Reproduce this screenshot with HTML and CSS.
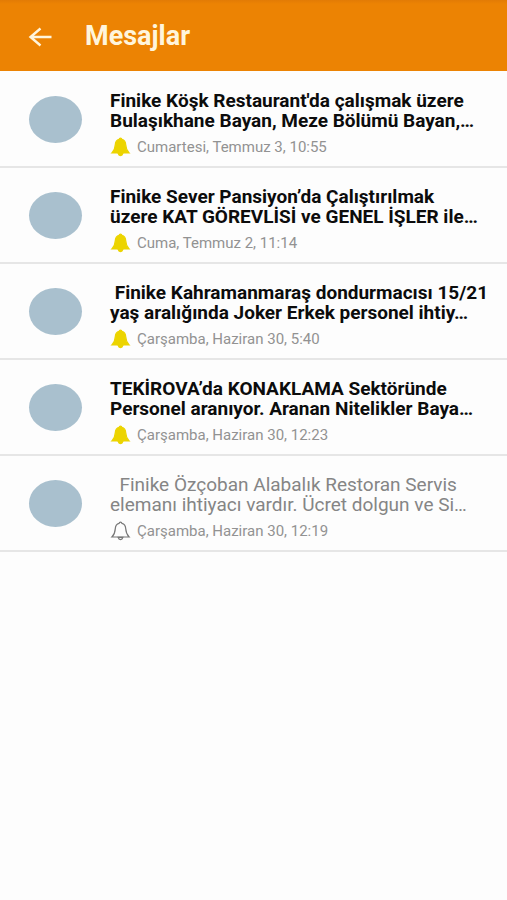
FILE: index.html
```html
<!DOCTYPE html>
<html lang="tr">
<head>
<meta charset="utf-8">
<meta name="viewport" content="width=device-width, initial-scale=1">
<title>Mesajlar</title>
<link rel="stylesheet" href="styles.css">
</head>
<body>
<svg class="sprite" aria-hidden="true">
  <symbol id="bell" viewBox="0 0 20 20">
    <path d="M10 1.2C10.8 1.2 11.3 1.7 11.4 2.3C14 3 15.1 5 15.2 7.6C15.4 11.4 16 13.4 18.6 16H1.4C4 13.4 4.6 11.4 4.8 7.6C4.9 5 6 3 8.6 2.3C8.7 1.7 9.2 1.2 10 1.2Z"/>
    <path d="M7.6 16.4Q8.2 18.6 10 18.6T12.4 16.4Z"/>
  </symbol>
</svg>
<header class="app-bar">
  <button class="back" type="button" aria-label="Geri">
    <svg class="back-icon" viewBox="0 0 24 20" aria-hidden="true"><path d="M23 10H2M12 1.5L2 10L12 18.5"/></svg>
  </button>
  <h1 class="app-title">Mesajlar</h1>
</header>
<main>
  <ul class="messages">
    <li class="message unread">
      <span class="avatar"></span>
      <div class="body">
        <h2 class="text">Finike Köşk Restaurant'da çalışmak üzere<br>Bulaşıkhane Bayan, Meze Bölümü Bayan,…</h2>
        <p class="meta"><svg class="bell" aria-hidden="true"><use href="#bell"/></svg><time>Cumartesi, Temmuz 3, 10:55</time></p>
      </div>
    </li>
    <li class="message unread">
      <span class="avatar"></span>
      <div class="body">
        <h2 class="text">Finike Sever Pansiyon’da Çalıştırılmak<br>üzere KAT GÖREVLİSİ ve GENEL İŞLER ile…</h2>
        <p class="meta"><svg class="bell" aria-hidden="true"><use href="#bell"/></svg><time>Cuma, Temmuz 2, 11:14</time></p>
      </div>
    </li>
    <li class="message unread">
      <span class="avatar"></span>
      <div class="body">
        <h2 class="text">&nbsp;Finike Kahramanmaraş dondurmacısı 15/21<br>yaş aralığında Joker Erkek personel ihtiy…</h2>
        <p class="meta"><svg class="bell" aria-hidden="true"><use href="#bell"/></svg><time>Çarşamba, Haziran 30, 5:40</time></p>
      </div>
    </li>
    <li class="message unread">
      <span class="avatar"></span>
      <div class="body">
        <h2 class="text">TEKİROVA’da KONAKLAMA Sektöründe<br>Personel aranıyor. Aranan Nitelikler Baya…</h2>
        <p class="meta"><svg class="bell" aria-hidden="true"><use href="#bell"/></svg><time>Çarşamba, Haziran 30, 12:23</time></p>
      </div>
    </li>
    <li class="message">
      <span class="avatar"></span>
      <div class="body">
        <h2 class="text">&nbsp;&nbsp;Finike Özçoban Alabalık Restoran Servis<br>elemanı ihtiyacı vardır. Ücret dolgun ve Si…</h2>
        <p class="meta"><svg class="bell" aria-hidden="true"><use href="#bell"/></svg><time>Çarşamba, Haziran 30, 12:19</time></p>
      </div>
    </li>
  </ul>
</main>
</body>
</html>
```

FILE: styles.css
```css
* {
  box-sizing: border-box;
}

body {
  margin: 0;
  min-height: 100vh;
  background: #fdfdfd;
  font-family: Roboto, "Liberation Sans", sans-serif;
}

.sprite {
  position: absolute;
  width: 0;
  height: 0;
}

.app-bar {
  display: flex;
  align-items: center;
  gap: 32px;
  padding: 15px 28px 13px;
  background: linear-gradient(#e27b05, #ec8303 4px);
}

.back {
  display: flex;
  width: 25px;
  padding: 0;
  border: 0;
  background: none;
}

.back-icon {
  width: 25px;
  height: 20px;
  fill: none;
  stroke: #fff5dc;
  stroke-width: 2.4;
}

.app-title {
  margin: 0;
  color: #fff5dc;
  font-size: 27px;
  font-weight: 700;
  line-height: 43px;
}

.messages {
  margin: 0;
  padding: 1px 0 0;
  list-style: none;
}

.message {
  display: flex;
  align-items: flex-start;
  gap: 28px;
  padding: 19px 12px 9px 29px;
  border-bottom: 2px solid #e6e6e6;
  color: #858585;
}

.avatar {
  flex: none;
  width: 53px;
  height: 47px;
  margin-top: 5px;
  border-radius: 50%;
  background: #a9c0ce;
}

.body {
  flex: 1;
  min-width: 0;
}

.text {
  margin: 0;
  font-size: 19px;
  font-weight: 400;
  line-height: 20px;
  white-space: nowrap;
}

.unread .text {
  color: #0c0c0c;
  font-weight: 700;
}

.meta {
  display: flex;
  align-items: center;
  gap: 6px;
  margin: 6px 0 0;
  color: #929292;
  font-size: 15px;
  line-height: 20px;
}

.bell {
  width: 21px;
  height: 20px;
  fill: none;
  stroke: #777;
  stroke-width: 1.2;
}

.unread .bell {
  fill: #ecd400;
  stroke: #ecd400;
}
```
